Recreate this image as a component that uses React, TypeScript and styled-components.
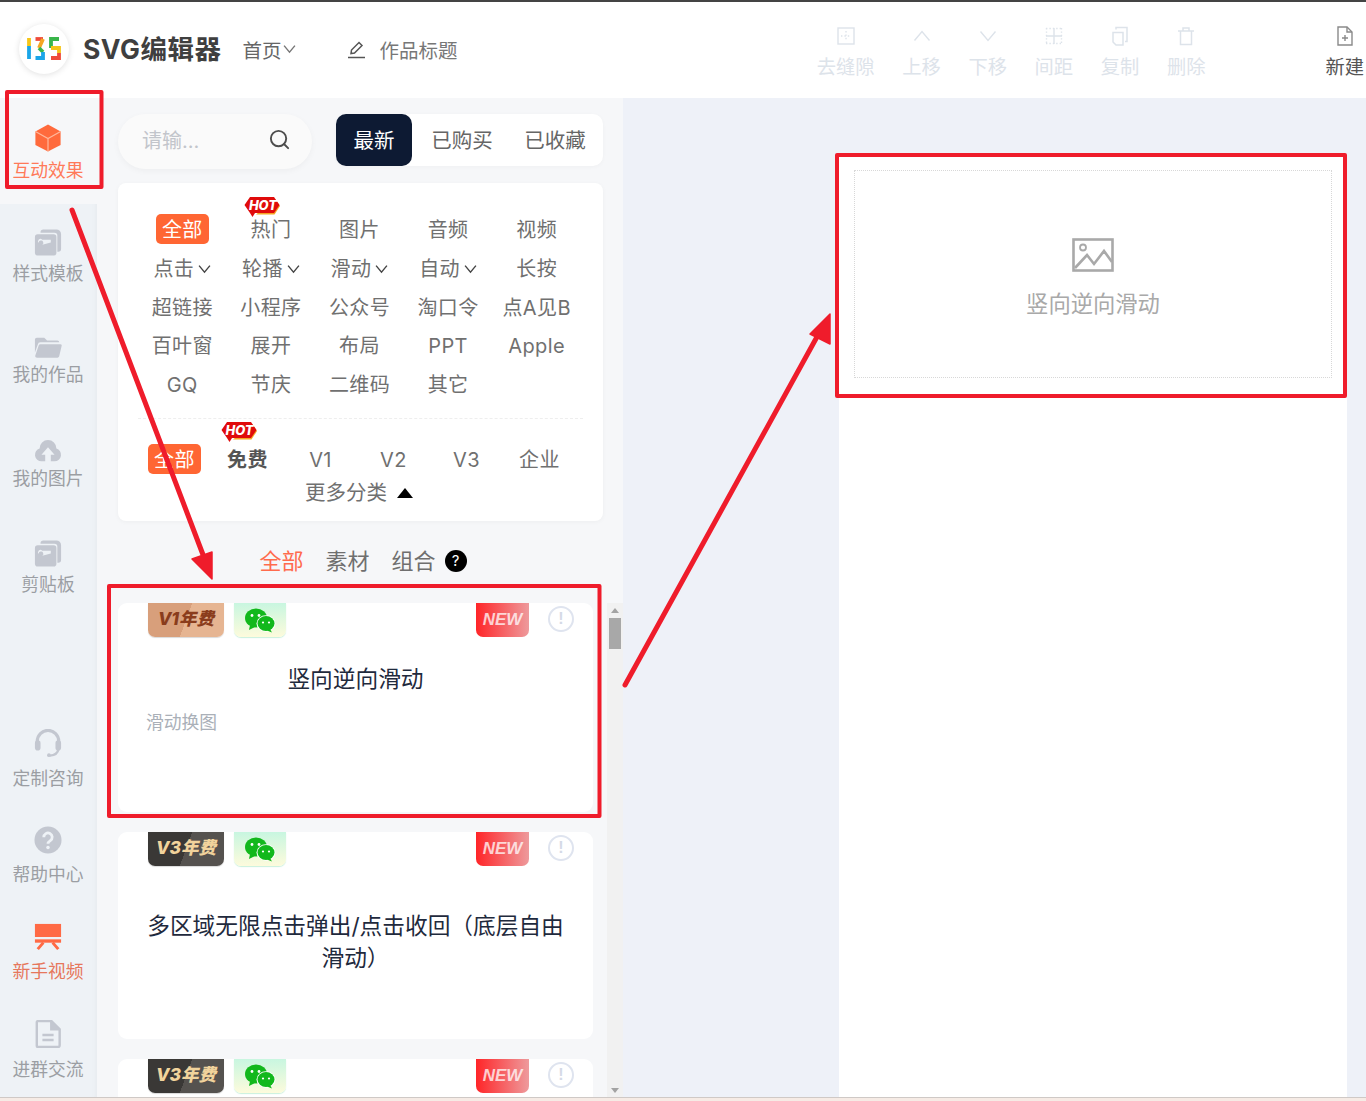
import React from "react";
import styled, { createGlobalStyle } from "styled-components";
import { Search } from "lucide-react";

const FONT = `Inter, "Noto Sans CJK SC", "Noto Sans", sans-serif`;

const Global = createGlobalStyle`
  html, body { margin: 0; padding: 0; background: #fff; overflow: hidden; }
  * { box-sizing: border-box; }
`;

const Page = styled.div`
  position: relative;
  width: 1366px;
  height: 1101px;
  display: flex;
  flex-direction: column;
  overflow: hidden;
  font-family: ${FONT};
  border-top: 2px solid #444;
`;

const Header = styled.header`
  height: 96px;
  flex: none;
  display: flex;
  align-items: center;
  background: #fff;
  padding: 0 2px 2px 19px;
`;
const LogoCircle = styled.div`
  width: 50px;
  height: 50px;
  border-radius: 50%;
  background: #fff;
  box-shadow: 0 1px 6px rgba(0, 0, 0, 0.12);
  display: flex;
  align-items: center;
  justify-content: center;
  flex: none;
`;
const Brand = styled.div`
  margin-left: 14px;
  padding-bottom: 3px;
  font-size: 26.5px;
  font-weight: 700;
  color: #3f3f3f;
  letter-spacing: 0.5px;
  white-space: nowrap;
`;
const HomeMenu = styled.div`
  margin-left: 21px;
  display: flex;
  align-items: center;
  gap: 2px;
  font-size: 19.5px;
  color: #666;
`;
const WorkTitle = styled.div`
  margin-left: 51px;
  display: flex;
  align-items: center;
  gap: 13px;
  font-size: 19.5px;
  color: #777;
`;
const Tools = styled.div`
  margin-left: auto;
  display: flex;
  gap: 27.6px;
  padding-top: 6px;
`;
const Tool = styled.div<{ $dark?: boolean }>`
  display: flex;
  flex-direction: column;
  align-items: center;
  gap: 7px;
  font-size: 19.3px;
  line-height: 26px;
  white-space: nowrap;
  color: ${(p) => (p.$dark ? "#555" : "#dde3ea")};
  & > svg {
    display: block;
    height: 22px;
    width: 22px;
  }
`;
const NewTool = styled(Tool)`
  margin-left: 120px;
  padding-top: 6px;
`;

const Main = styled.main`
  flex: 1;
  min-height: 0;
  display: flex;
`;

const Sidebar = styled.nav`
  width: 97px;
  flex: none;
  background: #eef2f6;
  display: flex;
  flex-direction: column;
  justify-content: space-between;
  box-shadow: inset -6px 0 6px -6px rgba(0, 0, 0, 0.05);
`;
const SideGroup = styled.div`
  display: flex;
  flex-direction: column;
`;
const SideItem = styled.div<{ $h: number; $gap: number; $pad: number; $first?: boolean; $accent?: string }>`
  height: ${(p) => p.$h}px;
  display: flex;
  flex-direction: column;
  align-items: center;
  gap: ${(p) => p.$gap}px;
  font-size: 17.8px;
  line-height: 24px;
  white-space: nowrap;
  padding: ${(p) => p.$pad}px 1px 0 0;
  color: ${(p) => p.$accent || "#9b9ea3"};
  background: ${(p) => (p.$first ? "#f6f7f9" : "transparent")};
  & > svg {
    width: 28px;
    height: 28px;
    flex: none;
  }
`;

const Panel = styled.section`
  width: 526px;
  flex: none;
  background: #f6f7f9;
  padding-top: 16px;
  display: flex;
  flex-direction: column;
  min-height: 0;
`;
const TopRow = styled.div`
  display: flex;
  padding-left: 21px;
  gap: 24px;
  align-items: flex-start;
`;
const SearchBox = styled.div`
  width: 194px;
  height: 55px;
  border-radius: 28px;
  background: #fafafa;
  box-shadow: 0 2px 6px rgba(0, 0, 0, 0.04);
  display: flex;
  align-items: center;
  justify-content: space-between;
  padding: 0 21px 5px 24px;
  font-size: 20px;
  color: #c2c5cb;
`;
const Tabs = styled.div`
  width: 267px;
  height: 52px;
  background: #fff;
  border-radius: 10px;
  display: flex;
  box-shadow: 0 1px 4px rgba(0, 0, 0, 0.03);
`;
const Tab = styled.div<{ $active?: boolean; $w: number }>`
  flex: 0 0 ${(p) => p.$w}px;
  border-radius: 10px;
  display: flex;
  align-items: center;
  justify-content: center;
  font-size: 20.5px;
  padding-bottom: 2px;
  background: ${(p) => (p.$active ? "#0d1a33" : "transparent")};
  color: ${(p) => (p.$active ? "#fff" : "#666")};
`;
const FilterCard = styled.div`
  margin: 14px 0 0 21px;
  width: 485px;
  height: 338px;
  background: #fff;
  border-radius: 8px;
  box-shadow: 0 1px 5px rgba(0, 0, 0, 0.04);
  padding-top: 27px;
`;
const CatGrid = styled.div`
  display: grid;
  grid-template-columns: repeat(5, 88.6px);
  grid-auto-rows: 38.7px;
  padding-left: 20px;
`;
const Cell = styled.div`
  display: flex;
  align-items: center;
  justify-content: center;
`;
const CatLabel = styled.span<{ $active?: boolean; $bold?: boolean }>`
  position: relative;
  display: inline-flex;
  align-items: center;
  gap: 4px;
  line-height: 28px;
  height: 30px;
  font-size: 20px;
  letter-spacing: 0.4px;
  white-space: nowrap;
  border-radius: 5px;
  font-weight: ${(p) => (p.$bold ? 700 : 400)};
  padding: ${(p) => (p.$active ? "2px 6px 0" : "2px 0 0")};
  background: ${(p) => (p.$active ? "#ff6633" : "transparent")};
  color: ${(p) => (p.$active ? "#fff" : p.$bold ? "#555" : "#707070")};
`;
const Hot = styled.span<{ $top: number }>`
  position: absolute;
  left: -6px;
  top: ${(p) => p.$top}px;
  width: 37px;
  height: 22px;
  & > svg {
    position: absolute;
    inset: 0;
  }
  & > b {
    position: absolute;
    left: 0;
    right: 0;
    top: 0;
    text-align: center;
    font: italic 800 13px/18px Inter, sans-serif;
    color: #fff;
    letter-spacing: 0;
  }
`;
const Divider = styled.div`
  margin: 15px 20px 23px;
  border-top: 1px dashed #eeeeee;
`;
const LevelRow = styled.div`
  display: grid;
  grid-template-columns: repeat(6, 73px);
  padding-left: 20px;
  height: 34px;
`;
const MoreRow = styled.div`
  margin-top: 4px;
  display: flex;
  align-items: center;
  justify-content: center;
  gap: 10px;
  font-size: 20.5px;
  line-height: 26px;
  color: #707070;
  padding-right: 3px;
`;
const Triangle = styled.i`
  width: 0;
  height: 0;
  border-left: 8px solid transparent;
  border-right: 8px solid transparent;
  border-bottom: 10px solid #000;
`;
const Segments = styled.div`
  margin-top: 25px;
  height: 30px;
  display: flex;
  align-items: center;
  justify-content: center;
  padding-left: 6px;
  gap: 22px;
  flex: none;
`;
const Segment = styled.span<{ $active?: boolean }>`
  font-size: 22px;
  line-height: 26px;
  display: inline-flex;
  align-items: center;
  gap: 9px;
  color: ${(p) => (p.$active ? "#ff6b4d" : "#6f6f6f")};
`;
const HelpDot = styled.span`
  width: 22px;
  height: 22px;
  border-radius: 50%;
  background: #000;
  color: #fff;
  font-size: 15px;
  line-height: 22px;
  text-align: center;
`;
const ListWrap = styled.div`
  margin-top: 27px;
  flex: 1;
  min-height: 0;
  display: flex;
`;
const List = styled.div`
  margin-left: 21px;
  width: 475px;
  display: flex;
  flex-direction: column;
  gap: 20px;
  overflow: hidden;
`;
const Card = styled.article<{ $h: number }>`
  height: ${(p) => p.$h}px;
  flex: none;
  background: #fff;
  border-radius: 9px;
`;
const BadgeRow = styled.div`
  display: flex;
  padding: 0 19px 0 30px;
  gap: 10px;
  align-items: flex-start;
`;
const Vip = styled.span<{ $v: number }>`
  width: 76px;
  height: 34px;
  border-radius: 0 0 7px 7px;
  display: flex;
  align-items: center;
  justify-content: center;
  padding-bottom: 3px;
  font: italic 800 17.5px/30px ${FONT};
  background: ${(p) =>
    p.$v === 1
      ? "linear-gradient(110deg,#d89f7b 0 50%,#e6b592 50% 100%)"
      : "linear-gradient(110deg,#3a3836 0 50%,#55524f 50% 100%)"};
  color: ${(p) => (p.$v === 1 ? "#8a3c1c" : "#f1d39c")};
  box-shadow: 0 1px 1px rgba(0, 0, 0, 0.15);
`;
const WxBadge = styled.span`
  width: 52px;
  height: 34px;
  border-radius: 0 0 7px 7px;
  display: flex;
  align-items: center;
  justify-content: center;
  background: linear-gradient(180deg, #c8f6e0, #fdfbdc);
  box-shadow: 0 1px 1px rgba(120, 220, 170, 0.4);
`;
const NewBadge = styled.span`
  margin-left: auto;
  width: 53px;
  height: 34px;
  border-radius: 0 0 7px 7px;
  display: flex;
  align-items: center;
  justify-content: center;
  font: italic 700 17px/34px "Liberation Sans", sans-serif;
  color: rgba(255, 255, 255, 0.75);
  background: linear-gradient(90deg, #ff2528, #ee9a9c);
`;
const InfoDot = styled.span`
  margin: 3px 0 0 9px;
  width: 26px;
  height: 26px;
  border-radius: 50%;
  border: 2px solid #dfe4ef;
  color: #d5dae6;
  font: 700 16px/22px "Liberation Sans", sans-serif;
  text-align: center;
`;
const CardTitle = styled.h3<{ $top: number }>`
  margin: ${(p) => p.$top}px 0 0;
  padding: 0 28px;
  font-size: 22.7px;
  font-weight: 400;
  line-height: 32px;
  text-align: center;
  color: #1f2a3d;
`;
const CardDesc = styled.p`
  margin: 15px 0 0 28px;
  font-size: 17.8px;
  line-height: 26px;
  color: #aab0b8;
`;
const Scrollbar = styled.div`
  margin-left: 14px;
  width: 16px;
  background: #f1f1f1;
  display: flex;
  flex-direction: column;
  align-items: center;
  padding-top: 5px;
`;
const ArrowUp = styled.i`
  width: 0;
  height: 0;
  border-left: 4px solid transparent;
  border-right: 4px solid transparent;
  border-bottom: 5px solid #a3a3a3;
`;
const ArrowDown = styled.i`
  width: 0;
  height: 0;
  margin-top: auto;
  margin-bottom: 4px;
  border-left: 4px solid transparent;
  border-right: 4px solid transparent;
  border-top: 5px solid #a3a3a3;
`;
const Thumb = styled.div`
  margin-top: 5px;
  width: 12px;
  height: 31px;
  background: #a8a8a8;
`;
const Canvas = styled.section`
  flex: 1;
  background: #eef1f8;
  display: flex;
  padding: 57px 0 0 216px;
`;
const Sheet = styled.div`
  width: 508px;
  background: #fff;
  padding: 15px 15px 0;
`;
const Placeholder = styled.div`
  height: 208px;
  border: 1px dotted #d8d8d8;
  display: flex;
  flex-direction: column;
  align-items: center;
  padding-top: 67px;
  gap: 15px;
  font-size: 22.3px;
  line-height: 34px;
  color: #a9a9a9;
`;
const BottomEdge = styled.div`
  height: 4px;
  flex: none;
  background: #f6ebe5;
  border-top: 1px solid #cfc9c6;
`;
const Annotations = styled.svg`
  position: absolute;
  left: 0;
  top: -2px;
  width: 1366px;
  height: 1101px;
  pointer-events: none;
`;

const Chev = ({ s = 13, c = "#555" }: { s?: number; c?: string }) => (
  <svg width={s} height={s * 0.75} viewBox="0 0 12 9" fill="none" stroke={c} strokeWidth="1.3">
    <path d="M1 1.5 6 7.5 11 1.5" />
  </svg>
);

const HotShape = () => (
  <>
    <svg width="37" height="22" viewBox="0 0 37 22">
      <path d="M31 3l5 7-5.500 8.500H12z" fill="#f5a623" />
      <path d="M6 1h24l5.500 8-5.500 8H11l-2.500 4L6 17 .5 9z" fill="#e00b0b" />
    </svg>
    <b>HOT</b>
  </>
);

const Wechat = () => (
  <svg width="32" height="25" viewBox="0 0 32 25">
    <ellipse cx="12" cy="10" rx="11" ry="9.500" fill="#12b81c" />
    <path d="M6 17l-1 5 6-3z" fill="#12b81c" />
    <ellipse cx="22" cy="15.500" rx="9.500" ry="8.200" fill="#fff" />
    <ellipse cx="22" cy="15.500" rx="8.500" ry="7.400" fill="#12b81c" />
    <path d="M26 21l2 3.500-5-2z" fill="#12b81c" />
    <circle cx="8" cy="7.500" r="1.400" fill="#fff" />
    <circle cx="15" cy="7.500" r="1.400" fill="#fff" />
    <circle cx="19" cy="14.500" r="1.100" fill="#fff" />
    <circle cx="25" cy="14.500" r="1.100" fill="#fff" />
  </svg>
);

const G = "#c3c7d0";
const stackIcon = (
  <svg viewBox="0 0 30 30">
    <path d="M7 3.500a3 3 0 0 1 3-3h14a5 5 0 0 1 5 5v16a3 3 0 0 1-3 3h-1V7a3 3 0 0 0-3-3H7z" fill={G} />
    <rect x="1" y="5.500" width="23" height="23" rx="3" fill={G} />
    <path d="M5 15a2.500 2.500 0 1 1 3.800 2L18 14.500v-3H8.800A2.500 2.500 0 0 0 5 15z" fill="#eef2f6" />
  </svg>
);

const sideTop = [
  { label: "样式模板", gap: 5, h: 104, icon: stackIcon },
  {
    label: "我的作品",
    gap: 2,
    h: 104,
    icon: (
      <svg viewBox="0 0 30 30">
        <path d="M1 7a2 2 0 0 1 2-2h8l3 3h11a2 2 0 0 1 2 2H7a3 3 0 0 0-3 2.500L1 21z" fill={G} />
        <path d="M7 12h21a1.600 1.600 0 0 1 1.600 2l-2.600 11a2 2 0 0 1-2 1.500H3.400a2 2 0 0 1-2-2.500L5 13.500A2 2 0 0 1 7 12z" fill={G} />
      </svg>
    ),
  },
  {
    label: "我的图片",
    gap: 2,
    h: 103,
    icon: (
      <svg viewBox="0 0 30 30">
        <path d="M8 26A7 7 0 0 1 6 12.300 9 9 0 0 1 24 12.300 7 7 0 0 1 22 26h-4v-7h4l-7-8-7 8h4v7z" fill={G} />
      </svg>
    ),
  },
  { label: "剪贴板", gap: 5, h: 106, icon: stackIcon },
];
const sideBottom = [
  {
    label: "定制咨询",
    gap: 10,
    h: 97,
    icon: (
      <svg viewBox="0 0 30 30">
        <path d="M3.500 15V13a11.500 11.500 0 0 1 23 0v2" fill="none" stroke={G} strokeWidth="3.400" />
        <rect x="1" y="12" width="6" height="11" rx="3" fill={G} />
        <rect x="23" y="12" width="6" height="11" rx="3" fill={G} />
        <path d="M26 22c-.5 5-5 6-9 6.500" fill="none" stroke={G} strokeWidth="2.500" />
        <circle cx="16" cy="28" r="2" fill={G} />
      </svg>
    ),
  },
  {
    label: "帮助中心",
    gap: 9,
    h: 97,
    icon: (
      <svg viewBox="0 0 30 30">
        <circle cx="15" cy="15" r="14.500" fill={G} />
        <path d="M10.500 12a4.500 4.500 0 1 1 7 3.700c-1.600 1.100-2.500 1.800-2.500 3.300" fill="none" stroke="#eef2f6" strokeWidth="3" />
        <circle cx="15" cy="23" r="1.900" fill="#eef2f6" />
      </svg>
    ),
  },
  {
    label: "新手视频",
    gap: 9,
    h: 97,
    accent: "#e6775c",
    icon: (
      <svg viewBox="0 0 30 30">
        <rect x="1" y="1" width="28" height="14" fill="#ff6a45" />
        <rect x="1" y="17.500" width="28" height="3.600" fill="#ff6a45" />
        <path d="M10 21l-6 7M20 21l6 7" stroke="#ff6a45" strokeWidth="3.200" fill="none" />
      </svg>
    ),
  },
  {
    label: "进群交流",
    gap: 10,
    h: 95,
    icon: (
      <svg viewBox="0 0 30 30">
        <path d="M3 2.500a1.500 1.500 0 0 1 1.500-1.500h14L27.500 10v17a2 2 0 0 1-2 2h-21A1.500 1.500 0 0 1 3 27.500z" fill="none" stroke={G} strokeWidth="2.600" />
        <path d="M18 1v9.500h9.500" fill={G} stroke={G} strokeWidth="1.500" />
        <path d="M9 16h12M9 21.500h12" stroke={G} strokeWidth="2.600" />
      </svg>
    ),
  },
];

const cats: { t: string; active?: boolean; hot?: boolean; menu?: boolean }[] = [
  { t: "全部", active: true },
  { t: "热门", hot: true },
  { t: "图片" },
  { t: "音频" },
  { t: "视频" },
  { t: "点击", menu: true },
  { t: "轮播", menu: true },
  { t: "滑动", menu: true },
  { t: "自动", menu: true },
  { t: "长按" },
  { t: "超链接" },
  { t: "小程序" },
  { t: "公众号" },
  { t: "淘口令" },
  { t: "点A见B" },
  { t: "百叶窗" },
  { t: "展开" },
  { t: "布局" },
  { t: "PPT" },
  { t: "Apple" },
  { t: "GQ" },
  { t: "节庆" },
  { t: "二维码" },
  { t: "其它" },
];

const cards = [
  { v: 1, h: 209, title: "竖向逆向滑动", top: 26, desc: "滑动换图" },
  { v: 3, h: 207, title: "多区域无限点击弹出/点击收回（底层自由滑动）", top: 44 },
  { v: 3, h: 207, title: "", top: 25 },
];

const L = "#dde3ea";
const toolIcons = [
  <svg viewBox="0 0 22 22" fill="none" stroke={L} strokeWidth="1.400" key="a">
    <rect x="3" y="3" width="16" height="16" />
    <path d="M11 6v10M6 11h10" strokeDasharray="1.400 2" />
  </svg>,
  <svg viewBox="0 0 22 22" fill="none" stroke={L} strokeWidth="1.400" key="b">
    <path d="M3.500 15.500 11 6.500l7.500 9" />
  </svg>,
  <svg viewBox="0 0 22 22" fill="none" stroke={L} strokeWidth="1.400" key="c">
    <path d="M3.500 6.500 11 15.500l7.500-9" />
  </svg>,
  <svg viewBox="0 0 22 22" fill="none" stroke={L} strokeWidth="1.400" key="d">
    <path d="M11 3v16M3 11h16" />
    <path d="M3.500 3v16M18.500 3v16M3 3.500h16M3 18.500h16" strokeDasharray="1.400 2" />
  </svg>,
  <svg viewBox="0 0 22 22" fill="none" stroke={L} strokeWidth="1.500" key="e">
    <path d="M4 7.500h10V20H7l-3-3z" />
    <path d="M7 4.500V2.500h11v14h-2" />
  </svg>,
  <svg viewBox="0 0 22 22" fill="none" stroke={L} strokeWidth="1.500" key="f">
    <path d="M5.500 6.500v13h11v-13M3 6h16M8 6V3h6v3" />
  </svg>,
];
const toolNames = ["去缝隙", "上移", "下移", "间距", "复制", "删除"];

const red = "#ef1c2b";

export default function App() {
  return (
    <Page>
      <Global />
      <Header>
        <LogoCircle>
          <svg width="36" height="26" viewBox="0 0 36 26" fill="none" strokeWidth="3.800">
            <path d="M3 2v8" stroke="#f5c518" />
            <path d="M3 10v13" stroke="#1aa5e8" />
            <path d="M9.500 3H17" stroke="#ef4b3a" />
            <path d="M17 3l-4 9" stroke="#f5a623" />
            <path d="M13 12l4 4" stroke="#39b54a" />
            <path d="M17 16v6H9.500" stroke="#1aa5e8" />
            <path d="M33 3h-8v9" stroke="#39b54a" />
            <path d="M25 12h8v5" stroke="#f5c518" />
            <path d="M33 17v5h-8" stroke="#ef4b3a" />
          </svg>
        </LogoCircle>
        <Brand>SVG编辑器</Brand>
        <HomeMenu>
          首页
          <Chev s={13} c="#777" />
        </HomeMenu>
        <WorkTitle>
          <svg width="19" height="19" viewBox="0 0 19 19" fill="none" stroke="#555" strokeWidth="1.500">
            <path d="M4 13.500 4.500 10 12 2.500l3 3L7.500 13z" />
            <path d="M1 17.500h17" />
          </svg>
          作品标题
        </WorkTitle>
        <Tools>
          {toolNames.map((n, i) => (
            <Tool key={n}>
              {toolIcons[i]}
              {n}
            </Tool>
          ))}
        </Tools>
        <NewTool $dark>
          <svg viewBox="0 0 22 22" fill="none" stroke="#8a8a8a" strokeWidth="1.400">
            <path d="M4 2h9l5 5v13H4z" />
            <path d="M13 2v5h5M11 10v6M8 13h6" />
          </svg>
          新建
        </NewTool>
      </Header>
      <Main>
        <Sidebar>
          <SideGroup>
            <SideItem $h={106} $gap={7} $pad={26} $first $accent="#ff7a59">
              <svg viewBox="0 0 30 30">
                <path d="M15 .5 28.500 8v14.500L15 29.500 1.500 22.500V8z" fill="#ff6a3c" />
                <path d="M1.500 8 15 15.500 28.500 8M15 15.500v14" stroke="#ffb89c" strokeWidth="1.300" fill="none" />
              </svg>
              互动效果
            </SideItem>
            {sideTop.map((s) => (
              <SideItem key={s.label} $h={s.h} $gap={s.gap} $pad={25}>
                {s.icon}
                {s.label}
              </SideItem>
            ))}
          </SideGroup>
          <SideGroup>
            {sideBottom.map((s) => (
              <SideItem key={s.label} $h={s.h} $gap={s.gap} $pad={18} $accent={s.accent}>
                {s.icon}
                {s.label}
              </SideItem>
            ))}
          </SideGroup>
        </Sidebar>
        <Panel>
          <TopRow>
            <SearchBox>
              请输…
              <Search size={23} color="#4d4d4d" strokeWidth={2} />
            </SearchBox>
            <Tabs>
              <Tab $active $w={76}>最新</Tab>
              <Tab $w={100}>已购买</Tab>
              <Tab $w={86}>已收藏</Tab>
            </Tabs>
          </TopRow>
          <FilterCard>
            <CatGrid>
              {cats.map((c) => (
                <Cell key={c.t}>
                  <CatLabel $active={c.active}>
                    {c.t}
                    {c.menu && <Chev s={13} c="#444" />}
                    {c.hot && (
                      <Hot $top={-18}>
                        <HotShape />
                      </Hot>
                    )}
                  </CatLabel>
                </Cell>
              ))}
            </CatGrid>
            <Divider />
            <LevelRow>
              <Cell>
                <CatLabel $active>全部</CatLabel>
              </Cell>
              <Cell>
                <CatLabel $bold>
                  免费
                  <Hot $top={-23}>
                    <HotShape />
                  </Hot>
                </CatLabel>
              </Cell>
              <Cell>
                <CatLabel>V1</CatLabel>
              </Cell>
              <Cell>
                <CatLabel>V2</CatLabel>
              </Cell>
              <Cell>
                <CatLabel>V3</CatLabel>
              </Cell>
              <Cell>
                <CatLabel>企业</CatLabel>
              </Cell>
            </LevelRow>
            <MoreRow>
              更多分类
              <Triangle />
            </MoreRow>
          </FilterCard>
          <Segments>
            <Segment $active>全部</Segment>
            <Segment>素材</Segment>
            <Segment>
              组合
              <HelpDot>?</HelpDot>
            </Segment>
          </Segments>
          <ListWrap>
            <List>
              {cards.map((c, i) => (
                <Card key={i} $h={c.h}>
                  <BadgeRow>
                    <Vip $v={c.v}>{c.v === 1 ? "V1年费" : "V3年费"}</Vip>
                    <WxBadge>
                      <Wechat />
                    </WxBadge>
                    <NewBadge>NEW</NewBadge>
                    <InfoDot>!</InfoDot>
                  </BadgeRow>
                  {c.title && <CardTitle $top={c.top}>{c.title}</CardTitle>}
                  {c.desc && <CardDesc>{c.desc}</CardDesc>}
                </Card>
              ))}
            </List>
            <Scrollbar>
              <ArrowUp />
              <Thumb />
              <ArrowDown />
            </Scrollbar>
          </ListWrap>
        </Panel>
        <Canvas>
          <Sheet>
            <Placeholder>
              <svg width="42" height="34" viewBox="0 0 42 34" fill="none" stroke="#a9a9a9" strokeWidth="2.600">
                <rect x="1.500" y="1.500" width="39" height="31" />
                <circle cx="11" cy="9.500" r="3" strokeWidth="1.800" />
                <path d="M3 30 15 17l7 9 10-13 8 11" />
              </svg>
              竖向逆向滑动
            </Placeholder>
          </Sheet>
        </Canvas>
      </Main>
      <BottomEdge />
      <Annotations viewBox="0 0 1366 1101" fill="none" stroke={red} strokeWidth="4" strokeLinejoin="round">
        <rect x="7" y="92" width="94.500" height="95" />
        <rect x="837" y="155" width="508" height="241" />
        <rect x="109" y="586" width="490.500" height="230" />
        <path d="M72 210 205 560" strokeWidth="5" strokeLinecap="round" />
        <path d="M212 579 192 559 212 552z" fill={red} stroke={red} strokeWidth="1.500" />
        <path d="M625 685 818 335" strokeWidth="5" strokeLinecap="round" />
        <path d="M830 314 810 334 830 344z" fill={red} stroke={red} strokeWidth="1.500" />
      </Annotations>
    </Page>
  );
}
